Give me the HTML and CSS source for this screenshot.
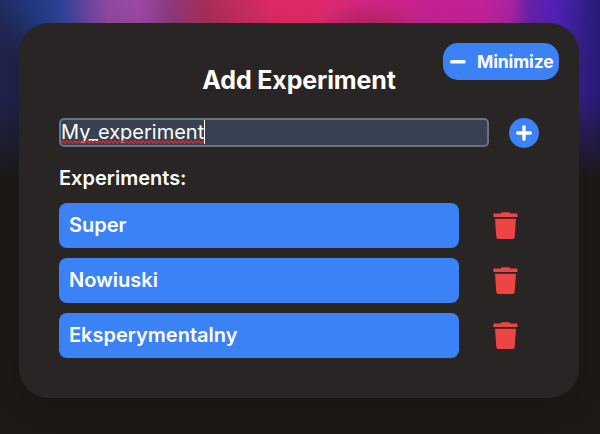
FILE: index.html
```html
<!DOCTYPE html>
<html lang="en">
<head>
<meta charset="utf-8">
<title>Add Experiment</title>
<link rel="stylesheet" href="styles.css">
</head>
<body>
<svg class="defs" width="0" height="0" aria-hidden="true">
  <symbol id="trash" viewBox="0 0 25 27">
    <path d="M1 1.500h6.700l1-1.300h7.600l1 1.300H24q.5 0 .5.500v2.500q0 .5-.5.500H1Q.5 5 .5 4.500V2Q.5 1.500 1 1.500zM2 6.700h21L21.700 25q-.2 2-2.200 2h-14q-2 0-2.200-2z"/>
  </symbol>
</svg>
<main class="card">
  <div class="top">
    <button class="minimize">
      <svg width="16" height="4" viewBox="0 0 16 4"><rect width="15.600" height="3.500" rx="1.500"/></svg>
      <span>Minimize</span>
    </button>
  </div>
  <h1>Add Experiment</h1>
  <div class="entry">
    <div class="field" role="textbox">
      <span class="value">My_experiment<svg class="squiggle" aria-hidden="true"><defs><pattern id="wave" width="4" height="4" patternUnits="userSpaceOnUse"><path d="M-2 .7L0 3.300L2 .700L4 3.300L6 .700"/></pattern></defs><rect width="100%" height="4" fill="url(#wave)"/></svg></span>
    </div>
    <button class="add" aria-label="Add">
      <svg width="16" height="16" viewBox="0 0 16 16"><path d="M8 1.700v12.600M1.700 8h12.600"/></svg>
    </button>
  </div>
  <h2>Experiments:</h2>
  <ul class="list">
    <li><span class="name">Super</span><svg class="trash"><use href="#trash"/></svg></li>
    <li><span class="name">Nowiuski</span><svg class="trash"><use href="#trash"/></svg></li>
    <li><span class="name">Eksperymentalny</span><svg class="trash"><use href="#trash"/></svg></li>
  </ul>
</main>
</body>
</html>
```
FILE: styles.css
```css
* { box-sizing: border-box; }
body {
  margin: 0;
  height: 434px;
  padding: 23px 21px 36px 19px;
  overflow: hidden;
  color: #fff;
  font-family: Inter, "Liberation Sans", sans-serif;
  background:
    linear-gradient(to bottom, transparent 0, transparent 95px, #1c1917 178px),
    radial-gradient(ellipse 60px 100px at 0 100px, #20244c 0, #20244c 50%, transparent 100%),
    radial-gradient(ellipse 50px 22px at 370px 25px, #b82464 0, transparent 100%),
    linear-gradient(to right, #222b60 0, #20397f 35px, #304398 63px, #64459f 85px, #91489f 108px, #9c48a3 140px, #8d3a80 170px, #a62e59 205px, #bf2d5c 235px, #dc2a65 275px, #df2a68 315px, #cf2680 360px, #c52292 430px, #c32197 480px, #ac23a0 510px, #6721a9 530px, #5221b8 555px, #36208d 580px, #291a78 600px);
}
.defs { position: absolute; }
.card {
  height: 375px;
  padding: 20px 40px 40px;
  border-radius: 30px;
  background: #292524;
  box-shadow: 0 8px 30px rgba(0, 0, 0, .15);
}
button {
  border: 0;
  padding: 0;
  color: #fff;
  font-family: inherit;
  background: #3b82f6;
}
.top {
  display: flex;
  justify-content: flex-end;
  margin-right: -20px;
}
.minimize {
  display: flex;
  align-items: center;
  gap: 11px;
  width: 116px;
  height: 37px;
  padding-left: 7px;
  border-radius: 15px;
  font-size: 17.5px;
  font-weight: 700;
  letter-spacing: -.12px;
  fill: #fff;
}
h1 {
  margin: -15px 0 23px;
  height: 30px;
  line-height: 30px;
  font-size: 25px;
  font-weight: 700;
  letter-spacing: -.15px;
  text-align: center;
}
.entry {
  display: flex;
  gap: 20px;
  height: 30px;
}
.field {
  width: 430px;
  height: 29px;
  border: 2px solid #6b7280;
  border-radius: 5px;
  background: #374151;
  font-size: 20px;
  line-height: 24px;
}
.value {
  position: relative;
  display: inline-block;
  height: 24px;
  border-right: 1px solid #fff;
}
.squiggle {
  position: absolute;
  left: 0;
  top: 20px;
  width: 100%;
  height: 4px;
}
.squiggle path { fill: none; stroke: #dc2626; stroke-width: 1.3; }
.add {
  display: flex;
  align-items: center;
  justify-content: center;
  width: 30px;
  height: 30px;
  border-radius: 50%;
}
.add path { stroke: #fff; stroke-width: 3.4; stroke-linecap: round; }
h2 {
  margin: 18px 0 13px;
  height: 24px;
  line-height: 24px;
  font-size: 20px;
  font-weight: 600;
}
.list {
  display: grid;
  gap: 10px;
  margin: 0;
  padding: 0;
  list-style: none;
}
.list li {
  display: flex;
  align-items: center;
  gap: 34px;
}
.name {
  width: 400px;
  height: 45px;
  padding-left: 10px;
  border-radius: 8px;
  background: #3b82f6;
  font-size: 20px;
  font-weight: 600;
  line-height: 45px;
}
.trash { width: 25px; height: 27px; fill: #ef4444; }
```
